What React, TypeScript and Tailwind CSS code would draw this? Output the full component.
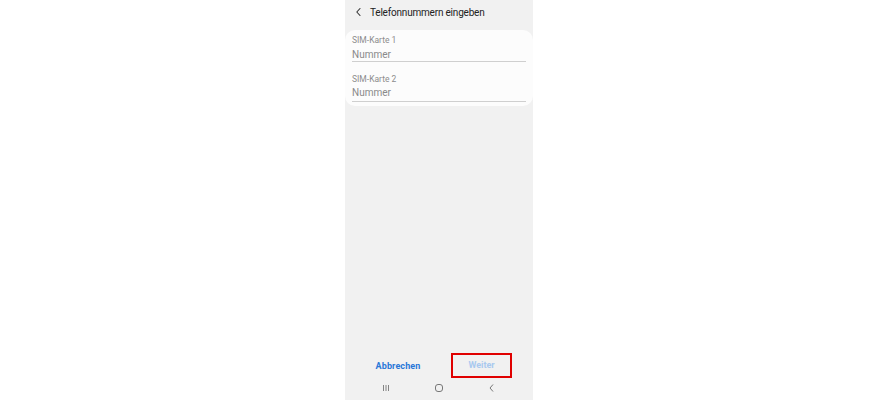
export default function App() {
  return (
    <div className="w-full h-[400px] bg-white flex" style={{ fontFamily: "Roboto, 'Liberation Sans', sans-serif" }}>
      <div className="ml-[345px] w-[188px] h-full bg-[#f1f1f1] flex flex-col">
        {/* header */}
        <div className="h-[24px] flex items-center pl-[9px]">
          <svg width="10" height="10" viewBox="0 0 10 10" className="mr-[6px]">
            <path d="M6 1.5 L2.8 5 L6 8.5" fill="none" stroke="#333" strokeWidth="1.1" strokeLinecap="round" strokeLinejoin="round" />
          </svg>
          <span className="text-[10px] text-[#222] tracking-[-0.2px]">Telefonnummern eingeben</span>
        </div>

        {/* card */}
        <div className="mt-[6px] bg-[#fcfcfc] rounded-[10px] px-[7px] pb-[4px]">
          <div className="h-[32px] flex flex-col border-b border-[#cfcfcf]">
            <span className="text-[8.5px] text-[#8c8c8c] leading-[10px] mt-[5px]">SIM-Karte 1</span>
            <span className="text-[10px] text-[#8a8a8a] leading-[12px] mt-[4px]">Nummer</span>
          </div>
          <div className="h-[40px] flex flex-col border-b border-[#cfcfcf]">
            <span className="text-[8.5px] text-[#8c8c8c] leading-[10px] mt-[12px]">SIM-Karte 2</span>
            <span className="text-[10px] text-[#8a8a8a] leading-[12px] mt-[3px]">Nummer</span>
          </div>
        </div>

        <div className="flex-1" />

        {/* buttons */}
        <div className="h-[26px] flex items-center mb-[-2px]">
          <div className="w-[106px] flex justify-center pt-[3px]">
            <span className="text-[9px] font-bold text-[#2a78d8] tracking-[0.1px]">Abbrechen</span>
          </div>
          <div className="w-[61px] h-[25px] border-2 border-[#e00000] flex items-center justify-center pt-[1px]">
            <span className="text-[9px] font-bold text-[#a9c9ef]">Weiter</span>
          </div>
        </div>

        {/* nav bar */}
        <div className="h-[24px] flex items-center justify-around px-[14px]">
          <svg width="10" height="10" viewBox="0 0 10 10">
            <path d="M2.5 2 V8 M5 2 V8 M7.5 2 V8" stroke="#777" strokeWidth="0.9" />
          </svg>
          <svg width="10" height="10" viewBox="0 0 10 10">
            <rect x="1.5" y="1.5" width="7" height="7" rx="2.5" fill="none" stroke="#777" strokeWidth="1" />
          </svg>
          <svg width="10" height="10" viewBox="0 0 10 10">
            <path d="M6 1.5 L3 5 L6 8.5" fill="none" stroke="#777" strokeWidth="1" />
          </svg>
        </div>
      </div>
    </div>
  );
}
